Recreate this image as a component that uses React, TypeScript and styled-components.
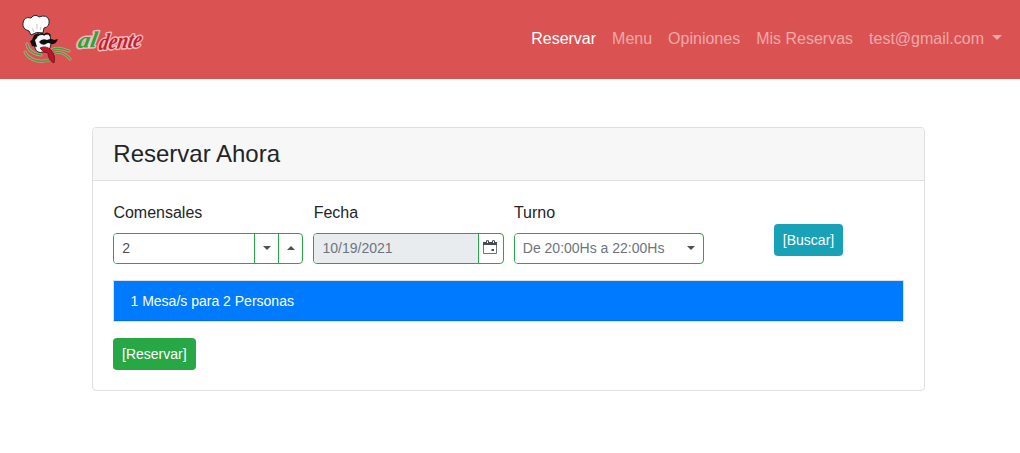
import React from 'react';
import styled, { createGlobalStyle } from 'styled-components';

const GlobalStyle = createGlobalStyle`
  *, *::before, *::after { box-sizing: border-box; }
  body {
    margin: 0;
    background: #fff;
    color: #212529;
    font: 400 16px/1.5 "Liberation Sans", Arial, sans-serif;
  }
`;

const Navbar = styled.nav`
  display: flex;
  align-items: center;
  justify-content: space-between;
  height: 79px;
  padding: 0 10px 2px 16px;
  background: #db5252;
`;

const Brand = styled.a`
  display: flex;
  svg { display: block; overflow: visible; }
`;

const NavList = styled.div`
  display: flex;
  align-items: center;
`;

const NavLink = styled.a<{ $active?: boolean }>`
  display: flex;
  align-items: center;
  padding: 8px;
  height: 40px;
  white-space: nowrap;
  color: ${p => (p.$active ? '#fff' : 'rgba(255, 255, 255, 0.5)')};
`;

const Caret = styled.span<{ $size: number; $up?: boolean; $gap?: number }>`
  width: 0;
  height: 0;
  margin-bottom: 2px;
  margin-left: ${p => p.$gap ?? 0}px;
  border-left: ${p => p.$size}px solid transparent;
  border-right: ${p => p.$size}px solid transparent;
  ${p => (p.$up ? 'border-bottom' : 'border-top')}: ${p => p.$size}px solid currentColor;
`;

const Card = styled.section`
  width: 833px;
  height: 264px;
  margin: 48px 0 0 92px;
  border: 1px solid #dfdfdf;
  border-radius: 4px;
  overflow: hidden;
`;

const CardHeader = styled.header`
  height: 53px;
  padding: 11px 20.3px 12px;
  background: #f7f7f7;
  border-bottom: 1px solid #dfdfdf;
`;

const Title = styled.h1`
  margin: 0;
  font-size: 24px;
  font-weight: 400;
  line-height: 29px;
`;

const CardBody = styled.div`
  padding: 20px;
`;

const Fields = styled.div`
  display: flex;
  gap: 10px;
  height: 63px;
  padding-left: 0.1px;
`;

const Field = styled.div`
  width: 190.25px;
`;

const Label = styled.label`
  display: block;
  height: 24px;
  margin-bottom: 8px;
  padding-left: 0.3px;
`;

const Control = styled.div`
  display: flex;
  height: 31px;
  border: 1px solid #28a745;
  border-radius: 4px;
  overflow: hidden;
  font-size: 14px;
  color: #495057;
`;

const Value = styled.div<{ $disabled?: boolean; $muted?: boolean }>`
  flex: 1;
  padding: 0 8px 0 8.2px;
  line-height: 29px;
  white-space: nowrap;
  background: ${p => (p.$disabled ? '#e9ecef' : '#fff')};
  color: ${p => (p.$disabled || p.$muted ? '#6c757d' : '#495057')};
`;

const Addon = styled.div<{ $plain?: boolean; $wide?: boolean }>`
  display: flex;
  align-items: center;
  justify-content: center;
  width: ${p => (p.$wide ? 25 : 24)}px;
  padding-bottom: ${p => (p.$wide ? 2 : 0)}px;
  border-left: ${p => (p.$plain ? '0' : '1px solid #28a745')};
`;

const Button = styled.button<{ $color: string }>`
  height: 32px;
  padding: 0 9px;
  border: 0;
  border-radius: 4px;
  background: ${p => p.$color};
  color: #fff;
  font: 400 14px/32px "Liberation Sans", Arial, sans-serif;
`;

const SearchSlot = styled.div`
  padding: 23px 0 0 60px;
`;

const ResultItem = styled.div`
  height: 42px;
  margin: 16px 0;
  padding: 0 16.5px;
  border: 1px solid #dfdfdf;
  background: #007bff;
  box-shadow: inset 0 -1px 0 #006fe6;
  color: #fff;
  font-size: 14px;
  line-height: 40px;
`;

const Logo = () => (
  <svg width="160" height="60" viewBox="0 0 160 60">
    <g strokeLinecap="round" fill="none">
      <g stroke="#fff" strokeOpacity=".35" strokeWidth="3">
        <path d="M11 35C12 42 18 45 25 46M34 42C40 37 46 40 53 42M35 46C42 41 49 44 54 50" />
        <path d="M9 43C14 53 27 54 36 50" />
      </g>
      <g stroke="#22b23a" strokeWidth="1.5">
        <path d="M11 35C12 42 18 45 25 46M34 42C40 37 46 40 53 42M35 46C42 41 49 44 54 50" />
        <path d="M9 43C14 53 27 54 36 50" />
      </g>
    </g>
    <path d="M19 26Q17 33 19 39Q21 45 27 43Q34 43 35 35L34 25Z" fill="#f7f5f5" stroke="#252525" strokeWidth="1" />
    <path d="M18 26L23 24L21 29L19 31L21 38L16 37L14 32L16 31Z" fill="#111" />
    <path d="M15 26L13 22Q6 20 7 14Q8 7 15 9Q19 4 23 8Q31 5 33 11Q34 18 28 19L27 24Q20 22 15 26Z" fill="#fff" stroke="#262626" strokeWidth="1" />
    <path d="M16 19L18 23M21 15L21 20M25 18L24 21" stroke="#aaa" strokeWidth=".7" />
    <path d="M22 27Q25 23 28 26Q32 22 34 27" fill="none" stroke="#111" strokeWidth="1.2" />
    <path d="M23 33Q26 29 31 31Q35 29 38 31L42 30Q40 36 35 35Q32 33 30 35Q26 37 23 33Z" fill="#111" />
    <path d="M24 39Q30 36 35 41Q40 46 38 54Q32 51 32 44Q27 44 24 39Z" fill="#c31328" stroke="#551018" strokeWidth=".7" />
    <g
      fontFamily='"Liberation Serif", serif'
      fontStyle="italic"
      fontWeight="700"
      stroke="#fff"
      strokeOpacity=".6"
      strokeWidth="3"
      strokeLinejoin="round"
      paintOrder="stroke"
    >
      <text transform="translate(61 39) rotate(-4) skewX(-14)" fontSize="22" textLength="19" lengthAdjust="spacingAndGlyphs" fill="#20a83a">al</text>
      <text transform="translate(82 41) rotate(-4) skewX(-14)" fontSize="23" textLength="43" lengthAdjust="spacingAndGlyphs" fill="#c51d30">dente</text>
    </g>
  </svg>
);

const CalendarIcon = () => (
  <svg width="15" height="15" viewBox="0 0 15 15">
    <path d="M.5 3.5H13.5V13.5H.5Z" fill="#fff" stroke="#6d747c" />
    <path d="M0 2H14V5H0Z" fill="#444b54" />
    <path d="M3.5 3V.7H5.5V3M9.5 3V.7H11.5V3" fill="#fff" stroke="#444b54" />
    <path d="M8.5 9H11V11H8.5Z" fill="#444b54" />
  </svg>
);

export default function App() {
  return (
    <>
      <GlobalStyle />
      <Navbar>
        <Brand><Logo /></Brand>
        <NavList>
          <NavLink $active>Reservar</NavLink>
          <NavLink>Menu</NavLink>
          <NavLink>Opiniones</NavLink>
          <NavLink>Mis Reservas</NavLink>
          <NavLink>test@gmail.com<Caret $size={5} $gap={8} /></NavLink>
        </NavList>
      </Navbar>
      <Card>
        <CardHeader><Title>Reservar Ahora</Title></CardHeader>
        <CardBody>
          <Fields>
            <Field>
              <Label>Comensales</Label>
              <Control>
                <Value>2</Value>
                <Addon><Caret $size={4} /></Addon>
                <Addon><Caret $size={4} $up /></Addon>
              </Control>
            </Field>
            <Field>
              <Label>Fecha</Label>
              <Control>
                <Value $disabled>10/19/2021</Value>
                <Addon $wide><CalendarIcon /></Addon>
              </Control>
            </Field>
            <Field>
              <Label>Turno</Label>
              <Control>
                <Value $muted>De 20:00Hs a 22:00Hs</Value>
                <Addon $plain><Caret $size={4} /></Addon>
              </Control>
            </Field>
            <SearchSlot><Button $color="#17a2b8">[Buscar]</Button></SearchSlot>
          </Fields>
          <ResultItem>1 Mesa/s para 2 Personas</ResultItem>
          <Button $color="#28a745">[Reservar]</Button>
        </CardBody>
      </Card>
    </>
  );
}
